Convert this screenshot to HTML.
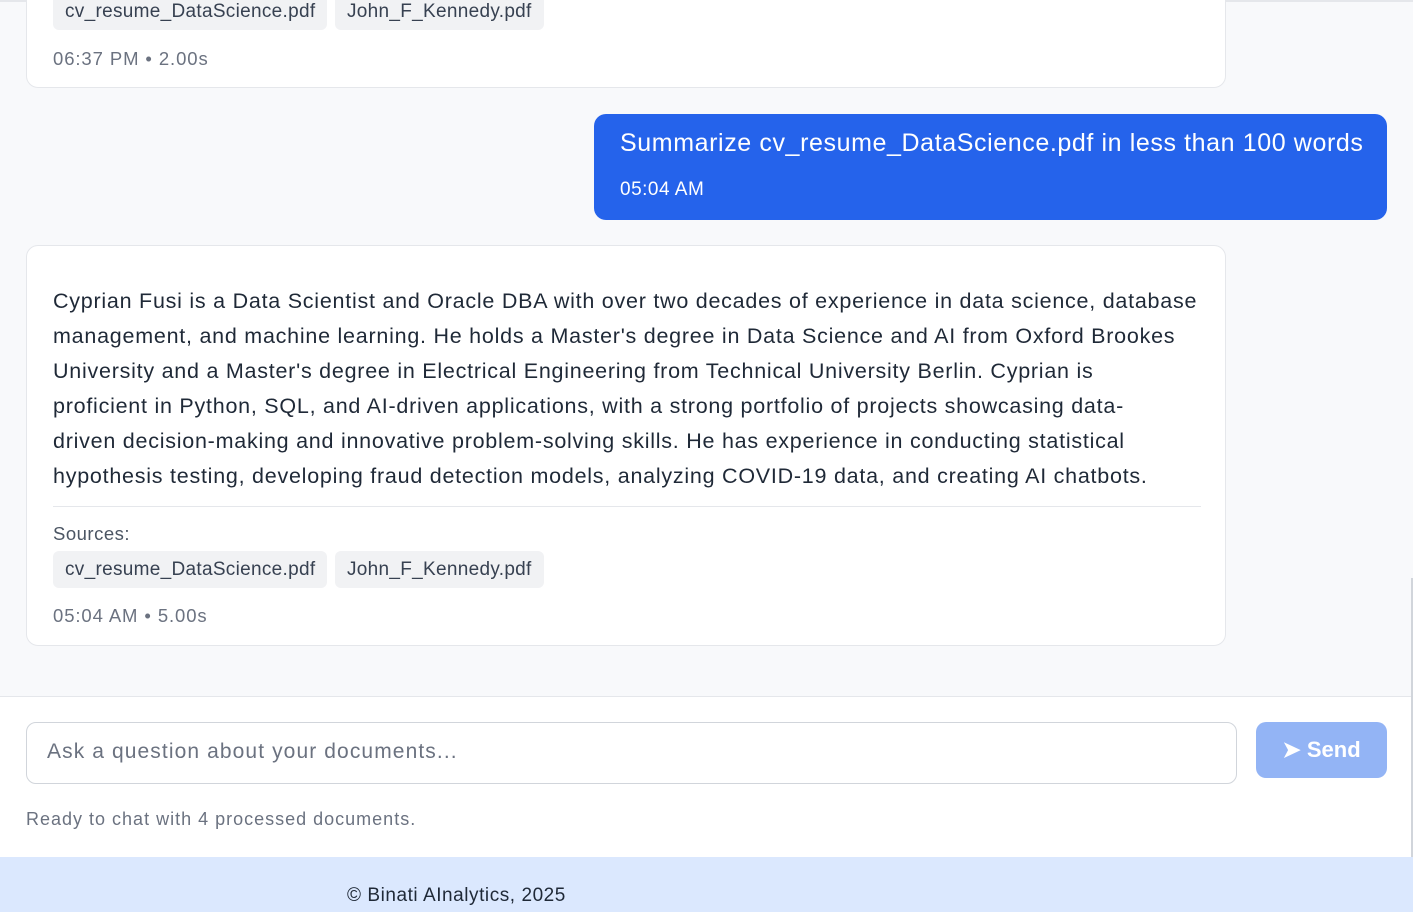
<!DOCTYPE html>
<html><head><meta charset="utf-8"><style>
*{box-sizing:border-box;margin:0;padding:0}
body{width:1413px;height:912px;overflow:hidden;font-family:"Liberation Sans",sans-serif;background:#fff;position:relative}
.chat{position:absolute;left:0;top:0;width:1413px;height:697px;background:#f8f9fb;border-bottom:1px solid #e5e7eb}
.card{position:absolute;left:26px;width:1200px;background:#fff;border:1px solid #e5e7eb;border-radius:12px}
.chip{position:absolute;height:37px;background:#f1f2f4;border-radius:6px;font-size:19px;letter-spacing:0.3px;color:#374151;line-height:37px;padding:0 12px}
.meta{position:absolute;left:26px;font-size:18.5px;letter-spacing:0.9px;color:#6b7280}
.user{position:absolute;left:594px;top:114px;width:793px;height:106px;background:#2563eb;border-radius:12px;color:#fff}
p.body{position:absolute;left:26px;top:38px;width:1170px;white-space:nowrap;font-size:21.5px;letter-spacing:0.75px;line-height:35px;color:#1f2937}
</style></head><body>
<div class="chat">
<div style="position:absolute;left:0;top:0;width:1413px;height:2px;background:#e5e7eb"></div>
<div class="card" style="top:-40px;height:128px">
<div class="chip" style="left:26px;top:32px">cv_resume_DataScience.pdf</div>
<div class="chip" style="left:308px;top:32px">John_F_Kennedy.pdf</div>
<div class="meta" style="top:87px">06:37 PM • 2.00s</div>
</div>
<div class="user">
<div style="position:absolute;left:26px;top:15px;font-size:25px;letter-spacing:0.6px">Summarize cv_resume_DataScience.pdf in less than 100 words</div>
<div style="position:absolute;left:26px;top:65px;font-size:19px;letter-spacing:0.5px">05:04 AM</div>
</div>
<div class="card" style="top:245px;height:401px">
<p class="body">Cyprian Fusi is a Data Scientist and Oracle DBA with over two decades of experience in data science, database<br>management, and machine learning. He holds a Master's degree in Data Science and AI from Oxford Brookes<br>University and a Master's degree in Electrical Engineering from Technical University Berlin. Cyprian is<br>proficient in Python, SQL, and AI-driven applications, with a strong portfolio of projects showcasing data-<br>driven decision-making and innovative problem-solving skills. He has experience in conducting statistical<br>hypothesis testing, developing fraud detection models, analyzing COVID-19 data, and creating AI chatbots.</p>
<div style="position:absolute;left:26px;top:260px;width:1148px;border-top:1px solid #e5e7eb"></div>
<div class="meta" style="top:277px;color:#4b5563;letter-spacing:0.5px">Sources:</div>
<div class="chip" style="left:26px;top:305px">cv_resume_DataScience.pdf</div>
<div class="chip" style="left:308px;top:305px">John_F_Kennedy.pdf</div>
<div class="meta" style="top:359px">05:04 AM • 5.00s</div>
</div>
</div>
<div style="position:absolute;left:26px;top:722px;width:1211px;height:62px;border:1px solid #d1d5db;border-radius:10px;padding-left:20px;line-height:58px;font-size:21px;letter-spacing:1.1px;color:#6b7280">Ask a question about your documents...</div>
<div style="position:absolute;left:1256px;top:722px;width:131px;height:56px;background:#93b4f5;border-radius:10px;color:#fff;font-size:22px;font-weight:bold;line-height:56px;text-align:center">➤ Send</div>
<div style="position:absolute;left:26px;top:809px;font-size:18px;letter-spacing:1px;color:#6b7280">Ready to chat with 4 processed documents.</div>
<div style="position:absolute;left:1411px;top:578px;width:2px;height:280px;background:#d1d5db"></div>
<div style="position:absolute;left:0;top:857px;width:1413px;height:55px;background:#dbe8fe"></div>
<div style="position:absolute;left:347px;top:885px;font-size:19px;letter-spacing:0.55px;color:#1f2937">© Binati AInalytics, 2025</div>
</body></html>
